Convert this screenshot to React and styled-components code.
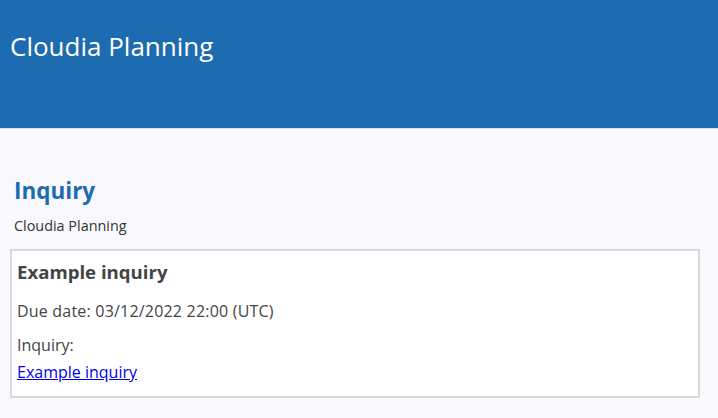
import React from 'react'
import styled, { createGlobalStyle } from 'styled-components'

const GlobalStyle = createGlobalStyle`
  html, body {
    margin: 0;
    padding: 0;
    background: #f9f9fd;
    font-family: "Open Sans", "Noto Sans", sans-serif;
  }
`

const Header = styled.header`
  height: 129px;
  background-color: #1d6bb1;
  border-bottom: 1px solid #dcdce4;
  box-sizing: border-box;
  padding: 27px 10px 0;
`

const Brand = styled.div`
  color: #ffffff;
  font-size: 26px;
  line-height: 38px;
`

const Main = styled.main`
  padding: 47px 18px 0 10px;
`

const PageTitle = styled.h1`
  margin: 0 0 0 4px;
  font-size: 22.5px;
  line-height: 30px;
  font-weight: 700;
  color: #1d6bb1;
`

const Subtitle = styled.div`
  margin: 10px 0 0 4px;
  font-size: 14.4px;
  line-height: 20px;
  color: #333333;
`

const Card = styled.section`
  margin-top: 13px;
  background: #ffffff;
  border: 2px solid #d9d9d9;
  padding: 8px 5px 12px;
  color: #444444;
  font-size: 16px;
  line-height: 24px;
`

const CardTitle = styled.h2`
  margin: 0;
  font-size: 18.6px;
  line-height: 26px;
  font-weight: 700;
`

const Line = styled.p`
  margin: ${({ $gap }) => $gap} 0 0;
  font-size: 16px;
  line-height: 24px;
  letter-spacing: ${({ $spacing }) => $spacing || 'normal'};
`

const Link = styled.a`
  display: block;
  width: max-content;
  margin-top: 3px;
  font-size: 16px;
  line-height: 24px;
  color: #0000ee;
  text-decoration: underline;
`

export default function App() {
  return (
    <>
      <GlobalStyle />
      <Header>
        <Brand>Cloudia Planning</Brand>
      </Header>
      <Main>
        <PageTitle>Inquiry</PageTitle>
        <Subtitle>Cloudia Planning</Subtitle>
        <Card>
          <CardTitle>Example inquiry</CardTitle>
          <Line $gap="14px" $spacing="0.2px">Due date: 03/12/2022 22:00 (UTC)</Line>
          <Line $gap="10px">Inquiry:</Line>
          <Link href="#">Example inquiry</Link>
        </Card>
      </Main>
    </>
  )
}
